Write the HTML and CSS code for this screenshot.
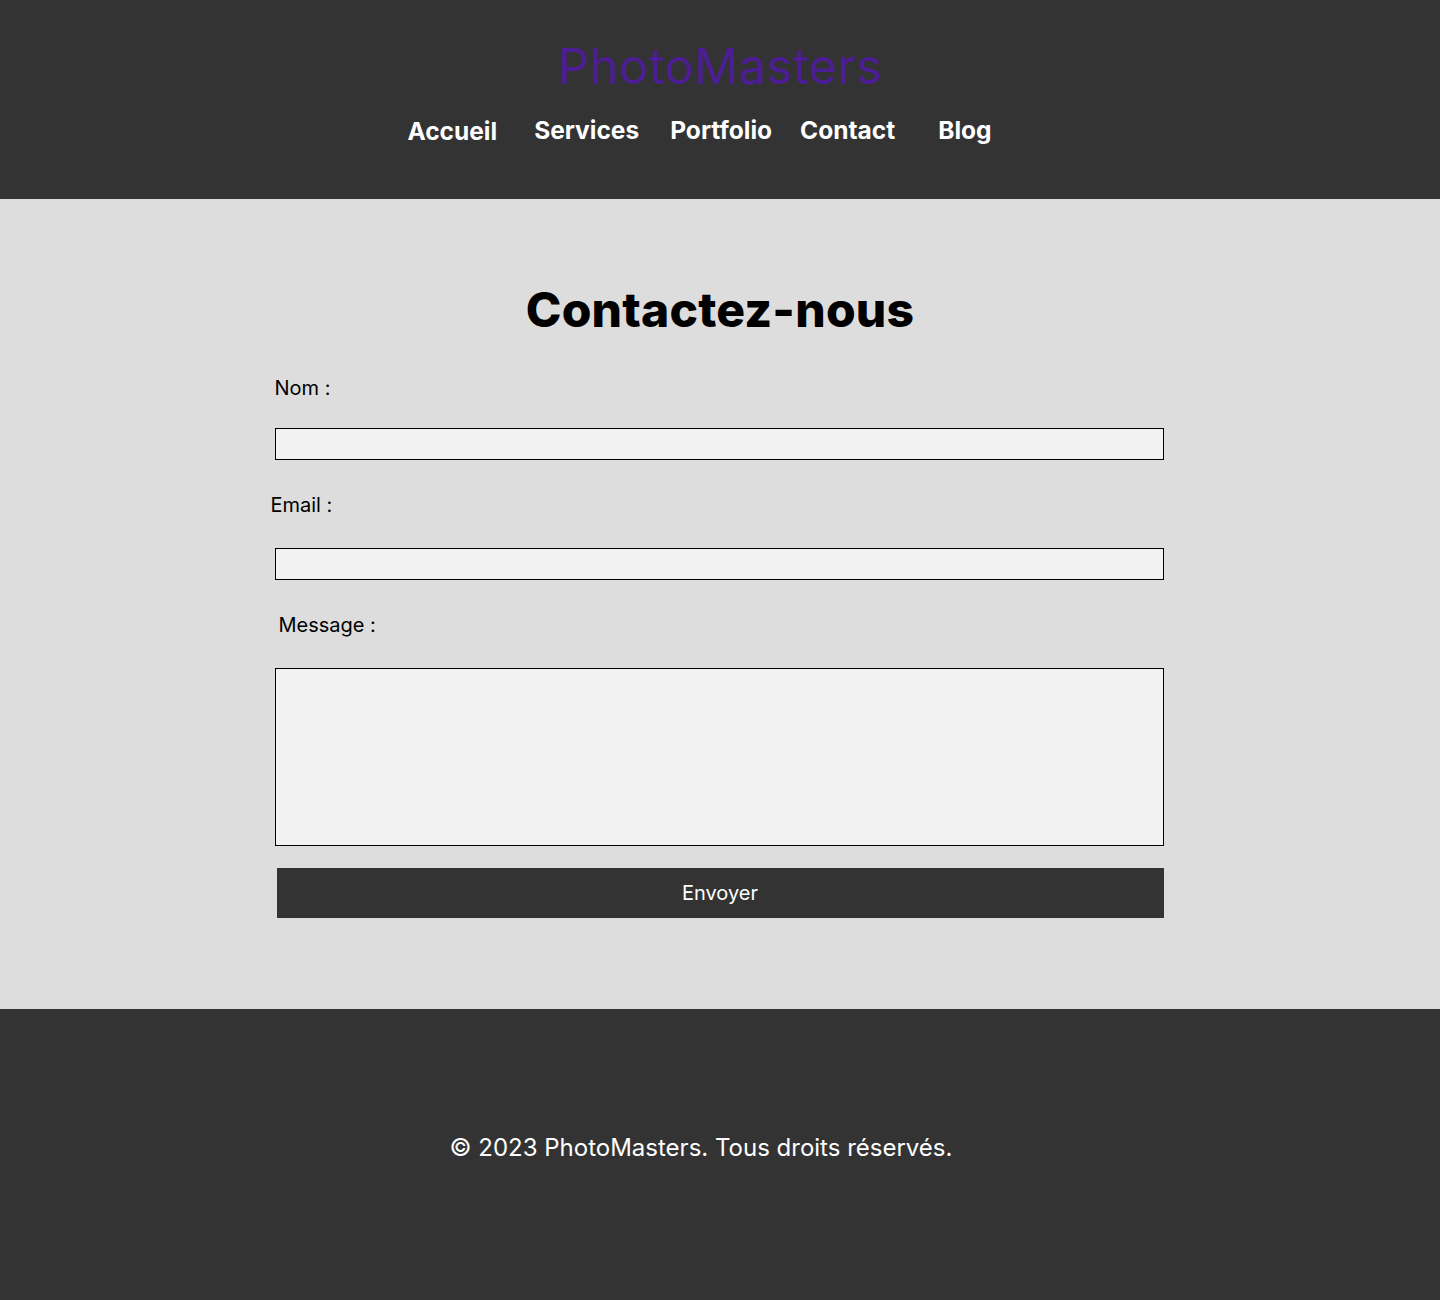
FILE: index.html
```html
<!DOCTYPE html>
<html lang="fr">
<head>
<meta charset="utf-8">
<title>PhotoMasters - Contact</title>
<link rel="stylesheet" href="styles.css">
</head>
<body>
<header class="site-header">
  <h1 class="logo">PhotoMasters</h1>
  <nav class="nav">
    <a class="nav-link nav-accueil" href="#">Accueil</a>
    <a class="nav-link nav-services" href="#">Services</a>
    <a class="nav-link nav-portfolio" href="#">Portfolio</a>
    <a class="nav-link nav-contact" href="#">Contact</a>
    <a class="nav-link nav-blog" href="#">Blog</a>
  </nav>
</header>
<main class="contact">
  <h2 class="contact-title">Contactez-nous</h2>
  <form class="contact-form">
    <label class="field-label label-nom" for="nom">Nom :</label>
    <input class="field-input" id="nom" type="text">
    <label class="field-label label-email" for="email">Email :</label>
    <input class="field-input" id="email" type="email">
    <label class="field-label label-message" for="message">Message :</label>
    <textarea class="field-textarea" id="message"></textarea>
    <button class="submit" type="submit">Envoyer</button>
  </form>
</main>
<footer class="site-footer">
  <p class="copyright">© 2023 PhotoMasters. Tous droits réservés.</p>
</footer>
</body>
</html>
```

FILE: styles.css
```css
* { box-sizing: border-box; }
html, body { margin: 0; padding: 0; }
body {
  font-family: Inter, "Noto Sans", sans-serif;
  background: #333333;
  color: #000;
}
.site-header {
  background: #333333;
  height: 199px;
  padding-top: 38px;
  display: flex;
  flex-direction: column;
  align-items: center;
}
.logo {
  margin: 0;
  font-size: 49px;
  font-weight: 400;
  line-height: 58px;
  letter-spacing: 0.3px;
  color: #4c1d95;
}
.nav {
  display: flex;
  margin-top: 19px;
  margin-right: 41px;
}
.nav-link {
  color: #fff;
  text-decoration: none;
  font-weight: 700;
  font-size: 24.5px;
  line-height: 30px;
}
.nav-accueil { margin-top: 1px; }
.nav-services { margin-left: 37px; }
.nav-portfolio { margin-left: 31px; }
.nav-contact { margin-left: 28px; }
.nav-blog { margin-left: 43px; }

.contact {
  background: #dddddd;
  height: 810px;
  padding-top: 80px;
  display: flex;
  flex-direction: column;
  align-items: center;
}
.contact-title {
  margin: 0;
  font-size: 48px;
  font-weight: 800;
  line-height: 62px;
  letter-spacing: 0.2px;
  text-align: center;
}
.contact-form {
  width: 889px;
  margin-top: 35px;
  margin-right: 2px;
  display: flex;
  flex-direction: column;
}
.field-label {
  font-size: 20px;
  line-height: 24px;
  margin-bottom: 28px;
}
.label-email { margin-left: -4px; margin-bottom: 31px; }
.label-message { margin-left: 4px; margin-bottom: 31px; }
.field-input {
  height: 32px;
  border: 1px solid #000;
  background: #f2f2f2;
  margin: 0 0 33px 0;
  padding: 0 6px;
  font-family: inherit;
}
.field-textarea {
  height: 178px;
  border: 1px solid #000;
  background: #f2f2f2;
  margin: 0;
  resize: none;
  font-family: inherit;
}
.submit {
  margin: 22px 0 0 2px;
  height: 50px;
  border: none;
  background: #333333;
  color: #fff;
  font-family: inherit;
  font-size: 20px;
  cursor: pointer;
}
.site-footer {
  background: #333333;
  height: 291px;
  padding-bottom: 14px;
  display: flex;
  align-items: center;
  justify-content: center;
}
.copyright {
  margin: 0 38px 0 0;
  color: #fff;
  font-size: 24px;
  line-height: 30px;
}
```
